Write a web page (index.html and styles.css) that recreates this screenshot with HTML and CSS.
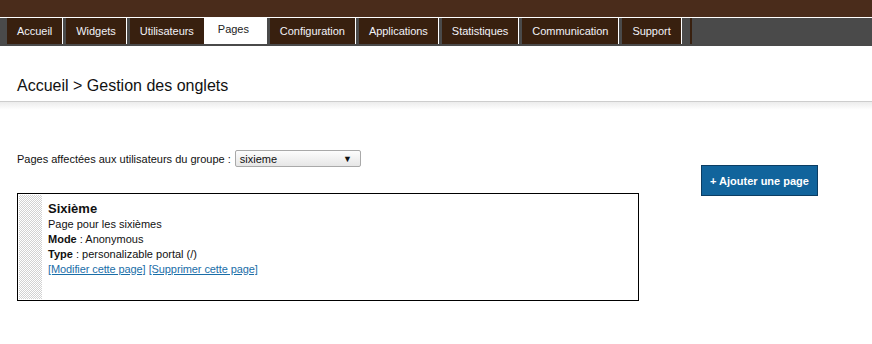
FILE: index.html
```html
<!DOCTYPE html>
<html lang="fr">
<head>
<meta charset="utf-8">
<title>Gestion des onglets</title>
<link rel="stylesheet" href="styles.css">
</head>
<body>
<div class="topbar"></div>
<ul class="tabs">
  <li class="tab">Accueil</li>
  <li class="tab">Widgets</li>
  <li class="tab">Utilisateurs</li>
  <li class="tab active">Pages</li>
  <li class="tab">Configuration</li>
  <li class="tab">Applications</li>
  <li class="tab">Statistiques</li>
  <li class="tab">Communication</li>
  <li class="tab">Support</li>
  <li class="tab-stub"></li>
</ul>
<div class="breadcrumb">Accueil &gt; Gestion des onglets</div>
<div class="shadow"></div>
<div class="content">
  <div class="main">
    <div class="group-row">
      <span class="group-label">Pages affectées aux utilisateurs du groupe :</span>
      <div class="select"><span>sixieme</span><span class="arrow">▼</span></div>
    </div>
    <div class="card">
      <div class="grip"></div>
      <div class="card-body">
        <div class="card-title">Sixième</div>
        <div class="line">Page pour les sixièmes</div>
        <div class="line"><b>Mode</b> : Anonymous</div>
        <div class="line"><b>Type</b> : personalizable portal (/)</div>
        <div class="line"><a href="#">[Modifier cette page]</a> <a href="#">[Supprimer cette page]</a></div>
      </div>
    </div>
  </div>
  <div class="side">
    <button class="add-btn">+ Ajouter une page</button>
  </div>
</div>
</body>
</html>
```
FILE: styles.css
```css
* { box-sizing: border-box; }
body {
  margin: 0;
  font-family: "Liberation Sans", Arial, sans-serif;
  color: #111;
  background: #fff;
}
.topbar {
  height: 18px;
  background: #4a2c1b;
  border-bottom: 1px solid #fff;
}
.tabs {
  list-style: none;
  margin: 0;
  padding: 0 0 0 4px;
  display: flex;
  align-items: flex-start;
  height: 28px;
  background: #4a4a4a;
}
.tab {
  margin-left: 3px;
  height: 26px;
  padding: 0 10px;
  background: #38200f;
  border-right: 1px solid #fff;
  color: #f2f2f8;
  font-size: 11px;
  line-height: 27px;
  letter-spacing: -0.03px;
  white-space: nowrap;
}
.tab.active {
  margin-left: 0;
  padding: 0 18px 0 13px;
  background: #fff;
  color: #222;
  line-height: 22px;
  border-right: none;
  width: 62px;
}
.tab-stub {
  margin-left: 8px;
  width: 2px;
  height: 26px;
  background: #38200f;
}
.breadcrumb {
  padding: 31px 0 6px 17px;
  font-size: 16px;
  line-height: 18px;
  color: #111;
  border-bottom: 1px solid #cdcdcd;
}
.shadow {
  height: 8px;
  background: linear-gradient(#ececec, #fff);
}
.content {
  display: flex;
  align-items: flex-start;
  padding: 40px 0 0 17px;
}
.main { width: 622px; }
.group-row {
  display: flex;
  align-items: center;
  height: 17px;
  font-size: 11px;
}
.group-label { margin-right: 4px; }
.select {
  width: 126px;
  height: 17px;
  border: 1px solid #a9a9a9;
  border-radius: 2px;
  background: linear-gradient(#fdfdfd, #e6e6e6);
  display: flex;
  align-items: center;
  justify-content: space-between;
  padding: 0 8px 0 4px;
  font-size: 11px;
  color: #111;
}
.arrow { font-size: 9px; }
.card {
  margin-top: 26px;
  height: 108px;
  border: 1px solid #000;
  padding: 1px;
  display: flex;
}
.grip {
  width: 23px;
  flex: none;
  background: repeating-conic-gradient(#d2d2d2 0 25%, #fff 0 50%) 0 0 / 2px 2px;
}
.card-body {
  padding: 6px 0 0 6px;
  font-size: 11px;
}
.card-title {
  font-size: 13px;
  font-weight: bold;
  line-height: 16px;
}
.line { line-height: 15px; }
.line a { color: #1a6ea8; letter-spacing: -0.1px; }
.side {
  margin-left: 62px;
  padding-top: 15px;
}
.add-btn {
  height: 31px;
  padding: 0 8px;
  background: #11649c;
  border: 1px solid #0b3d63;
  color: #fff;
  font-family: "Liberation Sans", Arial, sans-serif;
  font-size: 11px;
  font-weight: bold;
  cursor: pointer;
}
```
